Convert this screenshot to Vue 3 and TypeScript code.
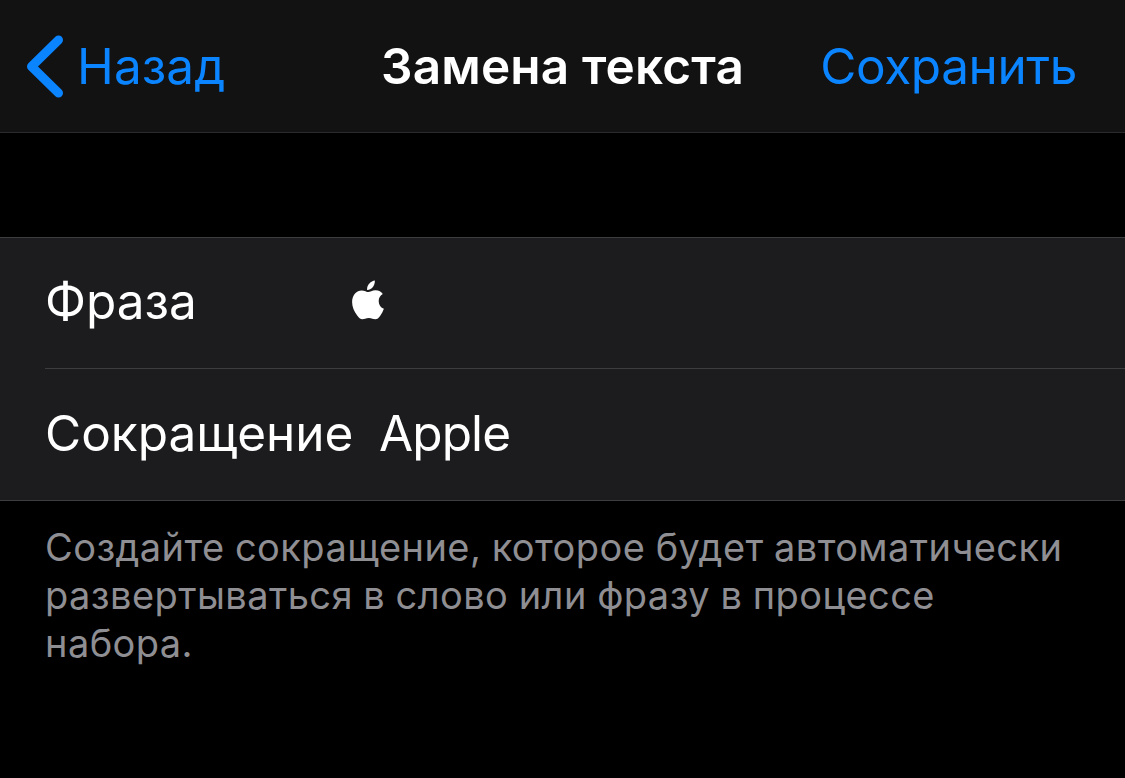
<template>
  <div class="screen">
    <header class="navbar">
      <button type="button" class="nav-btn btn-back">
        <svg class="chevron" width="38" height="64" viewBox="0 0 38 64">
          <path d="M32.5 6 L5.5 32.5 L32.5 59" />
        </svg>
        <span class="back-text">{{ backText }}</span>
      </button>
      <h1 class="title">{{ title }}</h1>
      <button type="button" class="nav-btn btn-save">{{ saveText }}</button>
    </header>

    <main class="content">
      <section class="group">
        <div v-for="field in fields" :key="field.id" class="row" :class="field.id">
          <span class="label">{{ field.label }}</span>
          <span v-if="field.value" class="value">{{ field.value }}</span>
          <svg v-else class="apple" width="34" height="40" viewBox="0 0 34 40">
            <path
              d="M23.8 0.6 C24.1 3.3 23 5.7 21.5 7.4 C20 9.1 18 10 16.1 9.9 C15.8 7.4 16.9 5.1 18.4 3.5 C19.9 1.9 22 0.8 23.8 0.6 Z"
            />
            <path
              d="M17.4 12.1 C18.9 12.1 21.2 10.3 24.5 10.3 C27.8 10.3 30.4 12 31.8 14.1 C29.2 15.7 27.7 18 27.7 21.2 C27.7 24.7 29.8 27.6 32.9 28.8 C32 31.4 30.7 33.8 29.1 36 C27.7 38 26.3 39.3 24.2 39.3 C21.9 39.3 20.9 38 17.8 38 C14.7 38 13.5 39.3 11.4 39.3 C9.3 39.3 7.8 37.8 6.2 35.6 C3 31.4 1.1 26.7 1.1 22 C1.1 14.6 5.8 10.4 10.6 10.4 C13.5 10.4 15.7 12.1 17.4 12.1 Z"
            />
          </svg>
        </div>
      </section>

      <p class="hint">{{ hint }}</p>
    </main>
  </div>
</template>

<script setup lang="ts">
import { ref } from 'vue'

interface Field {
  id: string
  label: string
  // an empty value is drawn as the logo glyph
  value: string
}

const backText = 'Назад'
const title = 'Замена текста'
const saveText = 'Сохранить'
const hint =
  'Создайте сокращение, которое будет автоматически развертываться в слово или фразу в процессе набора.'

const fields = ref<Field[]>([
  { id: 'phrase', label: 'Фраза', value: '' },
  { id: 'shortcut', label: 'Сокращение', value: 'Apple' }
])
</script>

<style>
body {
  margin: 0;
  background: #000;
}
</style>

<style scoped>
.screen {
  min-height: 100vh;
  background: #000;
  color: #fff;
  font-family: Inter, 'Liberation Sans', sans-serif;
  font-size: 49.5px;
  overflow: hidden;
}

.navbar {
  display: grid;
  grid-template-columns: 1fr auto 1fr;
  align-items: center;
  box-sizing: border-box;
  height: 133px;
  background: #121213;
  border-bottom: 1px solid #2a2a2c;
}

.nav-btn {
  display: flex;
  align-items: center;
  padding: 0;
  border: none;
  background: none;
  color: #0a84ff;
  font: inherit;
  line-height: 60px;
  cursor: pointer;
}

.btn-back {
  justify-self: start;
  gap: 13px;
  padding-left: 26px;
}

.back-text {
  letter-spacing: 0.1px;
}

.btn-save {
  justify-self: end;
  padding-right: 48px;
  letter-spacing: -0.4px;
}

.chevron {
  fill: none;
  stroke: #0a84ff;
  stroke-width: 9;
  stroke-linecap: round;
  stroke-linejoin: round;
}

.title {
  margin: 0;
  font-size: 49.5px;
  font-weight: 600;
  letter-spacing: 0.15px;
  line-height: 60px;
}

.content {
  padding-top: 104px;
}

.group {
  background: #1c1c1e;
  border-top: 1px solid #3d3d40;
  border-bottom: 1px solid #3d3d40;
}

.row {
  display: flex;
  align-items: center;
  box-sizing: border-box;
  height: 130px;
  margin-left: 45px;
  padding-bottom: 4px;
}

.row + .row {
  height: 132px;
  border-top: 1px solid #3d3d40;
}

.label {
  min-width: 306px;
}

.shortcut .label {
  min-width: 334px;
}

.value {
  letter-spacing: -0.9px;
}

.apple {
  margin-bottom: 2px;
  fill: #fff;
}

.hint {
  width: 1025px;
  margin: 0;
  padding: 22px 0 0 45px;
  color: #8e8e93;
  font-size: 38px;
  letter-spacing: 0.42px;
  word-spacing: -0.7px;
  line-height: 48px;
}
</style>
